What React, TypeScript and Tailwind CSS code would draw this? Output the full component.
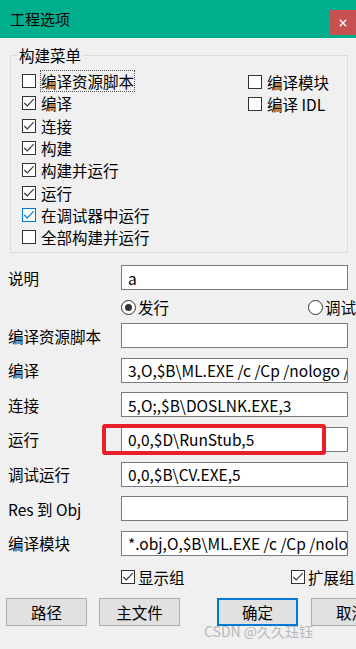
import React from 'react';

function CheckBox({ checked = false, blue = false }: { checked?: boolean; blue?: boolean }) {
  const color = blue ? '#0078d7' : '#333333';
  return (
    <span
      className={`w-[14px] h-[14px] shrink-0 border bg-white flex items-center justify-center ${blue ? 'border-[#0078d7]' : 'border-[#333333]'}`}
    >
      {checked && (
        <svg viewBox="0 0 14 14" className="w-[12px] h-[12px]" fill="none" stroke={color} strokeWidth="1.3">
          <polyline points="1.5,7 5,10.5 12.5,2.5" />
        </svg>
      )}
    </span>
  );
}

function CheckRow({
  label,
  checked,
  blue,
  focus,
}: {
  label: string;
  checked?: boolean;
  blue?: boolean;
  focus?: boolean;
}) {
  return (
    <div className="h-[22.3px] flex items-center gap-[4px]">
      <CheckBox checked={checked} blue={blue} />
      <span className={`leading-[20px] whitespace-nowrap ${focus ? 'border border-dotted border-[#555]' : 'border border-transparent'}`}>
        {label}
      </span>
    </div>
  );
}

function Radio({ checked = false }: { checked?: boolean }) {
  return (
    <span className="w-[15px] h-[15px] shrink-0 rounded-full border border-[#333333] bg-white flex items-center justify-center">
      {checked && <span className="w-[7px] h-[7px] rounded-full bg-[#333333]" />}
    </span>
  );
}

function FieldRow({ label, value = '' }: { label: string; value?: string }) {
  return (
    <div className="flex items-center h-[25px]">
      <span className="w-[113px] whitespace-nowrap">{label}</span>
      <div className="w-[227px] h-[25px] border border-[#7a7a7a] bg-white pl-[6px] flex items-center overflow-hidden whitespace-nowrap">
        {value}
      </div>
    </div>
  );
}

function Button({ label, primary = false }: { label: string; primary?: boolean }) {
  return (
    <button
      className={`w-[81px] h-[28px] shrink-0 bg-[#e1e1e1] flex items-center justify-center ${primary ? 'border-2 border-[#0078d7]' : 'border border-[#adadad]'}`}
    >
      {label}
    </button>
  );
}

export default function App() {
  return (
    <div className='relative w-[356px] h-[649px] overflow-hidden bg-[#f0f0f0] text-[15.5px] text-black font-["Noto_Sans_CJK_SC",sans-serif] leading-[20px]'>
      {/* title bar */}
      <div className="h-[38px] bg-[#00af8e] flex items-start">
        <span className="pl-[10px] pt-[9px] text-[15px]">工程选项</span>
        <div className="ml-auto mt-[10px] w-[26px] h-[25px] bg-[#c75050] flex items-center justify-center">
          <svg viewBox="0 0 10 10" className="w-[8px] h-[8px]" stroke="white" strokeWidth="1.6">
            <line x1="1" y1="1" x2="9" y2="9" />
            <line x1="9" y1="1" x2="1" y2="9" />
          </svg>
        </div>
      </div>

      {/* group box */}
      <div className="relative mt-[17px] ml-[10px] w-[338px] h-[198px] border border-[#dcdcdc] pt-[14px] pl-[11px] flex">
        <span className="absolute -top-[11px] left-[7px] px-[1px] bg-[#f0f0f0]">构建菜单</span>
        <div className="w-[226px] flex flex-col">
          <CheckRow label="编译资源脚本" focus />
          <CheckRow label="编译" checked />
          <CheckRow label="连接" checked />
          <CheckRow label="构建" checked />
          <CheckRow label="构建并运行" checked />
          <CheckRow label="运行" checked />
          <CheckRow label="在调试器中运行" checked blue />
          <CheckRow label="全部构建并运行" />
        </div>
        <div className="flex flex-col pt-[1px]">
          <CheckRow label="编译模块" />
          <CheckRow label="编译 IDL" />
        </div>
      </div>

      {/* fields */}
      <div className="pl-[8px]">
        <div className="mt-[12px]">
          <FieldRow label="说明" value="a" />
        </div>
        <div className="mt-[8px] h-[18px] flex items-center pl-[113px]">
          <div className="flex items-center gap-[2px] w-[192px]">
            <Radio checked />
            <span>发行</span>
          </div>
          <div className="flex items-center gap-[2px] whitespace-nowrap">
            <Radio />
            <span>调试</span>
          </div>
        </div>
        <div className="mt-[7px] flex flex-col gap-[9.67px]">
          <FieldRow label="编译资源脚本" />
          <FieldRow label="编译" value="3,O,$B\ML.EXE /c /Cp /nologo /" />
          <FieldRow label="连接" value="5,O;,$B\DOSLNK.EXE,3" />
          <FieldRow label="运行" value="0,0,$D\RunStub,5" />
          <FieldRow label="调试运行" value="0,0,$B\CV.EXE,5" />
          <FieldRow label="Res 到 Obj" />
          <FieldRow label="编译模块" value="*.obj,O,$B\ML.EXE /c /Cp /nologo /Zi" />
        </div>
        <div className="mt-[13px] h-[16px] flex items-center pl-[113px]">
          <div className="flex items-center gap-[3px] w-[170px]">
            <CheckBox checked />
            <span className="whitespace-nowrap">显示组</span>
          </div>
          <div className="flex items-center gap-[3px] whitespace-nowrap">
            <CheckBox checked />
            <span>扩展组</span>
          </div>
        </div>
      </div>

      {/* buttons */}
      <div className="mt-[13px] pl-[6px] flex whitespace-nowrap">
        <Button label="路径" />
        <div className="ml-[12px]">
          <Button label="主文件" />
        </div>
        <div className="ml-[37px]">
          <Button label="确定" primary />
        </div>
        <div className="ml-[13px]">
          <Button label="取消" />
        </div>
      </div>

      {/* red highlight annotation */}
      <div className="absolute left-[102px] top-[424px] w-[224px] h-[31px] border-[4px] border-[#e8202a] rounded-[3px]" />

      {/* watermark */}
      <span className="absolute left-[204px] top-[621px] text-[14px] text-[#b8b8b8] whitespace-nowrap">
        CSDN @久久珏钰
      </span>
    </div>
  );
}
